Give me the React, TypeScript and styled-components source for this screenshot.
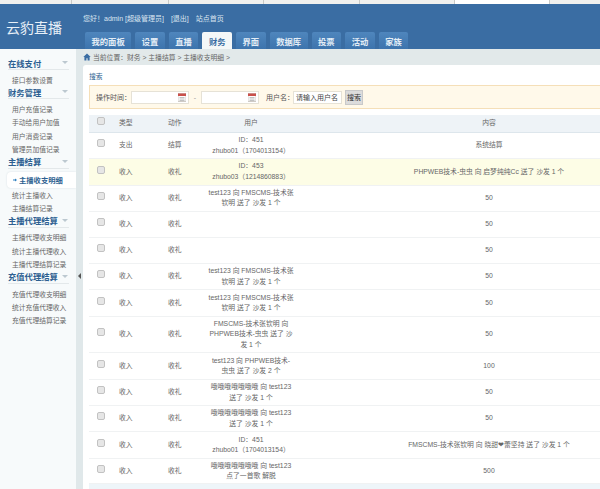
import React from 'react';
import styled, { createGlobalStyle } from 'styled-components';

const GlobalStyle = createGlobalStyle`
  html, body {
    margin: 0;
    padding: 0;
    width: 600px;
    height: 489px;
    overflow: hidden;
    background: #fff;
    font-family: "Liberation Sans", "Noto Sans CJK SC", sans-serif;
    font-size: 7px;
    color: #666;
  }
`;

const Page = styled.div`
  width: 600px;
  height: 489px;
  display: flex;
  flex-direction: column;
  overflow: hidden;
`;

const TopStrip = styled.div`
  height: 4px;
  flex: none;
  display: flex;
  background: #f0f0ee;
`;

const StripTab = styled.div<{ $w: number; $blank?: boolean }>`
  width: ${(p) => p.$w}px;
  flex: none;
  box-sizing: border-box;
  background: ${(p) => (p.$blank ? '#fff' : '#f0f0ee')};
  border-right: 1px solid #c9c9c6;
`;

const Header = styled.header`
  height: 45px;
  flex: none;
  display: flex;
  background: #3a6da3;
`;

const Logo = styled.div`
  width: 83px;
  flex: none;
  box-sizing: border-box;
  padding: 14px 0 0 6px;
  font-size: 14px;
  line-height: 20px;
  color: #e8f0f8;
`;

const HeaderRight = styled.div`
  display: flex;
  flex-direction: column;
  justify-content: space-between;
`;

const UserLine = styled.div`
  padding-top: 9px;
  display: flex;
  gap: 7px;
  font-size: 7px;
  line-height: 11px;
  color: #dbe6f1;
`;

const Tabs = styled.nav`
  display: flex;
  gap: 4px;
  margin-left: 2px;
`;

const Tab = styled.div<{ $active?: boolean }>`
  height: 17px;
  box-sizing: border-box;
  padding: 0 6.5px;
  display: flex;
  align-items: center;
  font-size: 8.3px;
  font-weight: 700;
  border-radius: 2px 2px 0 0;
  color: ${(p) => (p.$active ? '#3a6da3' : '#e3edf6')};
  background: ${(p) => (p.$active ? '#f4f7f8' : 'linear-gradient(#4f86bd, #3d74ad)')};
`;

const Body = styled.div`
  flex: 1;
  display: flex;
  min-height: 0;
`;

const Sidebar = styled.aside`
  width: 76px;
  flex: none;
  box-sizing: border-box;
  padding-top: 7px;
  background: #f7fafb;
`;

const SideGroup = styled.div`
  margin-bottom: -1px;
`;

const SideTitle = styled.div`
  height: 14px;
  box-sizing: border-box;
  margin: 0 7px 0 8px;
  display: flex;
  align-items: center;
  justify-content: space-between;
  font-size: 8.3px;
  font-weight: 700;
  white-space: nowrap;
  color: #2d5f91;
  border-bottom: 1px solid #e3e8ea;
`;

const Caret = styled.span`
  width: 0;
  height: 0;
  margin-right: 1px;
  border-left: 3px solid transparent;
  border-right: 3px solid transparent;
  border-top: 3px solid #bcc8d0;
`;

const SideList = styled.div`
  padding-top: 3px;
`;

const SideItem = styled.div<{ $active?: boolean }>`
  height: ${(p) => (p.$active ? '16px' : '13.4px')};
  display: flex;
  align-items: center;
  gap: 2px;
  box-sizing: border-box;
  white-space: nowrap;
  font-size: ${(p) => (p.$active ? '7.3px' : '6.8px')};
  padding-left: ${(p) => (p.$active ? '6px' : '12px')};
  margin-left: ${(p) => (p.$active ? '7px' : '0')};
  color: ${(p) => (p.$active ? '#2d5f91' : '#666')};
  font-weight: ${(p) => (p.$active ? 700 : 400)};
  background: ${(p) => (p.$active ? '#fff' : 'transparent')};
  border-radius: ${(p) => (p.$active ? '4px 0 0 4px' : '0')};
  box-shadow: ${(p) => (p.$active ? '0 0 2px #d5dde2' : 'none')};
`;

const Splitter = styled.div`
  width: 7px;
  flex: none;
  position: relative;
  background: #e0e8ea;
`;

const SplitArrow = styled.span`
  position: absolute;
  left: 2px;
  top: 224px;
  width: 0;
  height: 0;
  border-top: 3px solid transparent;
  border-bottom: 3px solid transparent;
  border-right: 3px solid #555;
`;

const Main = styled.main`
  flex: 1;
  min-width: 0;
  display: flex;
  flex-direction: column;
  background: #e2e9ea;
`;

const Crumbs = styled.div`
  height: 16px;
  flex: none;
  display: flex;
  align-items: center;
  gap: 2px;
  font-size: 6.8px;
  color: #666;
`;

const Content = styled.div`
  flex: 1;
  padding: 5px 0 0 6px;
  background: #fff;
  border-radius: 3px 0 0 0;
`;

const SearchLabel = styled.div`
  height: 15px;
  font-size: 6.8px;
  line-height: 14px;
  color: #2d5f91;
`;

const SearchBar = styled.div`
  width: 520px;
  height: 24px;
  box-sizing: border-box;
  display: flex;
  align-items: center;
  padding-left: 6px;
  font-size: 7px;
  white-space: nowrap;
  color: #555;
  background: #fff9ea;
  border-top: 1px solid #f5dfb8;
  border-bottom: 1px solid #f5dfb8;
  border-left: 1px solid #f5dfb8;
`;

const TimeLabel = styled.span`
  width: 35px;
  flex: none;
`;

const DateBox = styled.div`
  width: 58px;
  height: 13px;
  flex: none;
  box-sizing: border-box;
  display: flex;
  align-items: center;
  justify-content: flex-end;
  padding-right: 2px;
  background: #fff;
  border: 1px solid #e6e2d6;
`;

const Dash = styled.span`
  width: 12px;
  flex: none;
  text-align: center;
  color: #999;
`;

const NameLabel = styled.span`
  width: 27px;
  margin-left: 7px;
  flex: none;
`;

const NameInput = styled.div`
  width: 49px;
  height: 13px;
  margin-right: 3px;
  flex: none;
  box-sizing: border-box;
  display: flex;
  align-items: center;
  padding-left: 2px;
  color: #444;
  background: #fff;
  border: 1px solid #e6e2d6;
`;

const SearchButton = styled.div`
  width: 18px;
  height: 15px;
  flex: none;
  box-sizing: border-box;
  display: flex;
  align-items: center;
  justify-content: center;
  color: #333;
  background: #dcdcdc;
  border: 1px solid #c9c9c9;
`;

const Table = styled.table`
  width: 594px;
  margin-top: 6px;
  table-layout: fixed;
  border-collapse: collapse;
  font-size: 6.8px;
  line-height: 10.5px;
  color: #666;
`;

const Th = styled.th<{ $left?: boolean }>`
  height: 17px;
  padding: 0;
  font-weight: 400;
  text-align: ${(p) => (p.$left ? 'left' : 'center')};
  background: #eef3f7;
  border-bottom: 1px solid #dde6ec;
`;

const Row = styled.tr<{ $h: number; $hot?: boolean }>`
  height: ${(p) => p.$h}px;
  background: ${(p) => (p.$hot ? '#fdfde6' : '#fff')};
  border-bottom: 1px solid #f0f2f3;
`;

const Td = styled.td<{ $left?: boolean }>`
  padding: 0;
  text-align: ${(p) => (p.$left ? 'left' : 'center')};
  vertical-align: middle;
`;

const CheckCell = styled(Td)`
  padding-left: 8px;
  text-align: left;
`;

const CheckHead = styled(Th)`
  padding-left: 8px;
  text-align: left;
`;

const Check = styled.span`
  display: inline-block;
  width: 6px;
  height: 6px;
  vertical-align: 1px;
  background: #e6e6e6;
  border: 1px solid #c2c2c2;
  border-radius: 2px;
`;

const UserCell = styled(Td)`
  padding: 0 1px;
`;

const TableEnd = styled.div`
  width: 520px;
  height: 6px;
  background: #eef5f9;
`;

const CalendarIcon = () => (
  <svg width="8" height="9" viewBox="0 0 8 9">
    <rect x="0" y="0.5" width="8" height="8" fill="#fff" stroke="#b0a8a0" strokeWidth="0.6" />
    <rect x="0" y="0.5" width="8" height="2.5" fill="#c9504a" />
    <path d="M1.5 4.5h5M1.5 6h5M1.5 7.5h5" stroke="#999" strokeWidth="0.6" />
  </svg>
);

const HomeIcon = () => (
  <svg width="8" height="8" viewBox="0 0 8 8">
    <path d="M4 0.5 0.3 4h1.1v3.5h2V5.2h1.2v2.3h2V4h1.1z" fill="#3a6da3" />
  </svg>
);

const ActiveArrow = () => (
  <svg width="4" height="4" viewBox="0 0 4 4">
    <path d="M0 1.4h2V0.4L4 2 2 3.6V2.6H0z" fill="#2d7fc0" />
  </svg>
);

const tabs = ['我的面板', '设置', '直播', '财务', '界面', '数据库', '投票', '活动', '家族'];

const menu = [
  { title: '在线支付', items: ['接口参数设置'] },
  { title: '财务管理', items: ['用户充值记录', '手动给用户加值', '用户消费记录', '管理员加值记录'] },
  { title: '主播结算', items: ['主播收支明细', '统计主播收入', '主播结算记录'] },
  { title: '主播代理结算', items: ['主播代理收支明细', '统计主播代理收入', '主播代理结算记录'] },
  { title: '充值代理结算', items: ['充值代理收支明细', '统计充值代理收入', '充值代理结算记录'] },
];

const gift = (
  <>
    test123 向 FMSCMS-技术张
    <br />
    钦明 送了 沙发 1 个
  </>
);
const oh = (
  <>
    哦哦哦哦哦哦哦 向 test123
    <br />
    送了 沙发 1 个
  </>
);
const id451 = (
  <>
    ID：451
    <br />
    zhubo01（1704013154）
  </>
);

const rows: { h: number; type: string; action: string; user: React.ReactNode; content: string; hot?: boolean }[] = [
  { h: 26, type: '支出', action: '结算', user: id451, content: '系统结算' },
  {
    h: 26.5,
    type: '收入',
    action: '收礼',
    hot: true,
    user: (
      <>
        ID：453
        <br />
        zhubo03（1214860883）
      </>
    ),
    content: 'PHPWEB技术-虫虫 向 启梦纯纯Cc 送了 沙发 1 个',
  },
  { h: 26.5, type: '收入', action: '收礼', user: gift, content: '50' },
  { h: 26, type: '收入', action: '收礼', user: '', content: '50' },
  { h: 26, type: '收入', action: '收礼', user: '', content: '50' },
  { h: 26, type: '收入', action: '收礼', user: gift, content: '50' },
  { h: 27, type: '收入', action: '收礼', user: gift, content: '50' },
  {
    h: 36,
    type: '收入',
    action: '收礼',
    user: (
      <>
        FMSCMS-技术张钦明 向
        <br />
        PHPWEB技术-虫虫 送了 沙
        <br />
        发 1 个
      </>
    ),
    content: '50',
  },
  {
    h: 27,
    type: '收入',
    action: '收礼',
    user: (
      <>
        test123 向 PHPWEB技术-
        <br />
        虫虫 送了 沙发 2 个
      </>
    ),
    content: '100',
  },
  { h: 26, type: '收入', action: '收礼', user: oh, content: '50' },
  { h: 26, type: '收入', action: '收礼', user: oh, content: '50' },
  { h: 27, type: '收入', action: '收礼', user: id451, content: 'FMSCMS-技术张钦明 向 晓甜❤蕾坚持 送了 沙发 1 个' },
  {
    h: 25,
    type: '收入',
    action: '收礼',
    user: (
      <>
        哦哦哦哦哦哦哦 向 test123
        <br />
        点了一首歌 解脱
      </>
    ),
    content: '500',
  },
];

const App: React.FC = () => (
  <Page>
    <GlobalStyle />
    <TopStrip>
      <StripTab $w={72} />
      <StripTab $w={97} />
      <StripTab $w={95} />
      <StripTab $w={96} />
      <StripTab $w={95} />
      <StripTab $w={95} $blank />
    </TopStrip>
    <Header>
      <Logo>云豹直播</Logo>
      <HeaderRight>
        <UserLine>
          <span>您好！admin [超级管理员]</span>
          <span>[退出]</span>
          <span>站点首页</span>
        </UserLine>
        <Tabs>
          {tabs.map((t) => (
            <Tab key={t} $active={t === '财务'}>
              {t}
            </Tab>
          ))}
        </Tabs>
      </HeaderRight>
    </Header>
    <Body>
      <Sidebar>
        {menu.map((g) => (
          <SideGroup key={g.title}>
            <SideTitle>
              {g.title}
              <Caret />
            </SideTitle>
            <SideList>
              {g.items.map((i) => {
                const active = i === '主播收支明细';
                return (
                  <SideItem key={i} $active={active}>
                    {active && <ActiveArrow />}
                    {i}
                  </SideItem>
                );
              })}
            </SideList>
          </SideGroup>
        ))}
      </Sidebar>
      <Splitter>
        <SplitArrow />
      </Splitter>
      <Main>
        <Crumbs>
          <HomeIcon />
          当前位置：财务 &gt; 主播结算 &gt; 主播收支明细 &gt;
        </Crumbs>
        <Content>
          <SearchLabel>搜索</SearchLabel>
          <SearchBar>
            <TimeLabel>操作时间：</TimeLabel>
            <DateBox>
              <CalendarIcon />
            </DateBox>
            <Dash>-</Dash>
            <DateBox>
              <CalendarIcon />
            </DateBox>
            <NameLabel>用户名：</NameLabel>
            <NameInput>请输入用户名</NameInput>
            <SearchButton>搜索</SearchButton>
          </SearchBar>
          <Table>
            <colgroup>
              <col style={{ width: 30 }} />
              <col style={{ width: 49 }} />
              <col style={{ width: 39 }} />
              <col style={{ width: 88 }} />
              <col />
            </colgroup>
            <thead>
              <tr>
                <CheckHead>
                  <Check />
                </CheckHead>
                <Th $left>类型</Th>
                <Th $left>动作</Th>
                <Th>用户</Th>
                <Th>内容</Th>
              </tr>
            </thead>
            <tbody>
              {rows.map((r, i) => (
                <Row key={i} $h={r.h} $hot={r.hot}>
                  <CheckCell>
                    <Check />
                  </CheckCell>
                  <Td $left>{r.type}</Td>
                  <Td $left>{r.action}</Td>
                  <UserCell>{r.user}</UserCell>
                  <Td>{r.content}</Td>
                </Row>
              ))}
            </tbody>
          </Table>
          <TableEnd />
        </Content>
      </Main>
    </Body>
  </Page>
);

export default App;
